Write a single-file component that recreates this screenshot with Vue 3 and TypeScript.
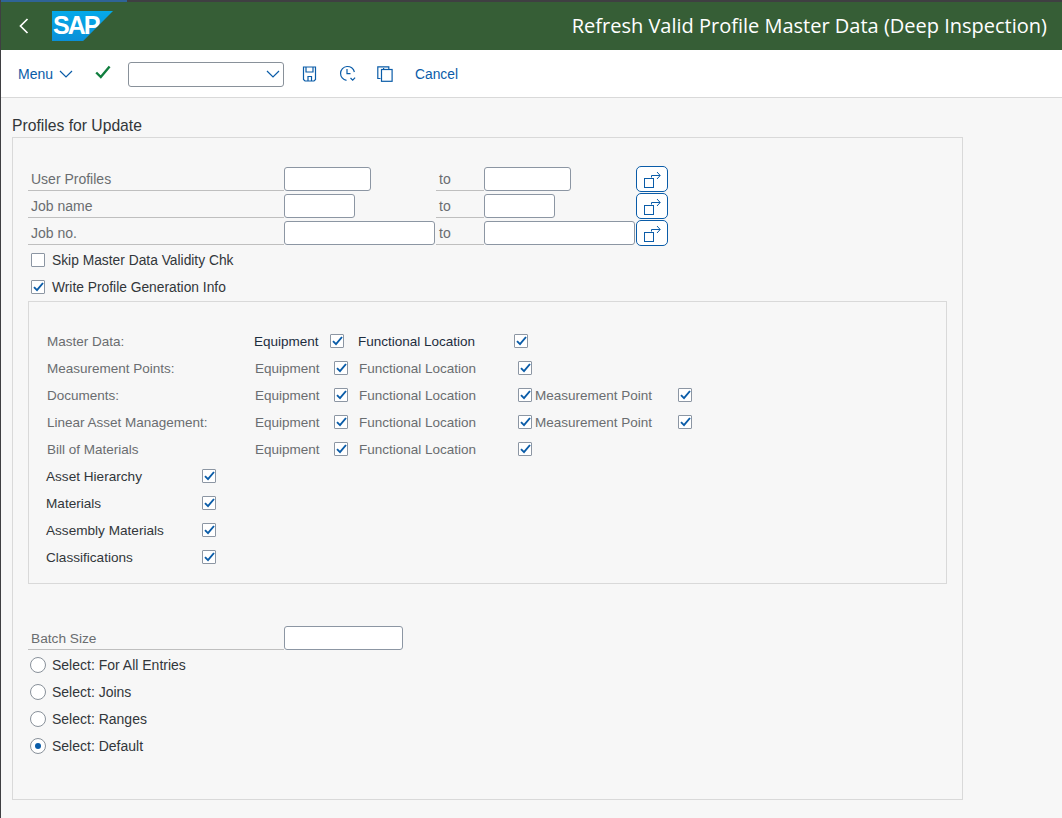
<script setup lang="ts">
const ranges = [
  { label: 'User Profiles', w: 'w87' },
  { label: 'Job name', w: 'w71' },
  { label: 'Job no.', w: 'w151' },
]
const groups = [
  { label: 'Measurement Points:', m: false },
  { label: 'Documents:', m: true },
  { label: 'Linear Asset Management:', m: true },
  { label: 'Bill of Materials', m: false },
]
const extras = ['Asset Hierarchy', 'Materials', 'Assembly Materials', 'Classifications']
const radios = [
  { label: 'Select: For All Entries', on: false },
  { label: 'Select: Joins', on: false },
  { label: 'Select: Ranges', on: false },
  { label: 'Select: Default', on: true },
]
</script>

<template>
  <div class="app">
    <div class="strip"><div class="progress"></div></div>
    <header class="shell">
      <svg class="back" width="10" height="16" viewBox="0 0 10 16"><path d="M8.5 1 1.5 8l7 7" fill="none" stroke="#fff" stroke-width="1.7" /></svg>
      <div class="logo"><span>SAP</span></div>
      <h1>Refresh Valid Profile Master Data (Deep Inspection)</h1>
    </header>
    <nav class="toolbar">
      <button class="tb-text menu">Menu
        <svg width="14" height="8" viewBox="0 0 14 8"><path d="M1 1l6 6 6-6" fill="none" stroke="#0a5ca8" stroke-width="1.2" /></svg>
      </button>
      <svg class="ok" width="16" height="14" viewBox="0 0 16 14"><path d="M1.2 7.5 5.8 12 14.6 1.4" fill="none" stroke="#107e3e" stroke-width="2.4" /></svg>
      <div class="cmd">
        <svg width="14" height="8" viewBox="0 0 14 8"><path d="M1 1l6 6 6-6" fill="none" stroke="#0a5ca8" stroke-width="1.2" /></svg>
      </div>
      <svg class="ico save" width="15" height="16" viewBox="0 0 15 16" fill="none" stroke="#0a5ca8" stroke-width="1.2"><path d="M1.5 1h12v12.5L12 15H3l-1.5-1.5z" /><path d="M4 1v5h7V1M6 15v-4.5h3.5V15" /></svg>
      <svg class="ico clock" width="17" height="17" viewBox="0 0 17 17" fill="none" stroke="#0a5ca8" stroke-width="1.2"><path d="M15.4 7A7 7 0 1 0 7.5 15.4" /><path d="M8 4v4.6h3.5M11.5 13l2.2 2.2 2.4-2.6" /></svg>
      <svg class="ico copy" width="16" height="16" viewBox="0 0 16 16" fill="none" stroke="#0a5ca8" stroke-width="1.2"><path d="M3.5 12.5H.8V.8h11v2.4" /><rect x="4.5" y="3.5" width="10.6" height="11.8" /><path d="M6.6 3.5V2" /></svg>
      <button class="tb-text cancel">Cancel</button>
    </nav>
    <main class="content">
      <h2>Profiles for Update</h2>
      <section class="panel">
        <div v-for="r in ranges" :key="r.label" class="row range">
          <span class="fld-label first">{{ r.label }}</span>
          <div class="cell-a"><div class="input" :class="r.w"></div></div>
          <span class="fld-label to">to</span>
          <div class="cell-b"><div class="input" :class="r.w"></div></div>
          <button class="multi">
            <svg width="30" height="24" viewBox="1 1 30 24" fill="none" stroke="#0a5ca8" stroke-width="1"><rect x="8.5" y="12.5" width="9" height="9" /><path d="M15.5 11.5v-2H24M21 6l3.2 3.5L21 13" /></svg>
          </button>
        </div>
        <label class="row chk-row"><span class="box"></span>Skip Master Data Validity Chk</label>
        <label class="row chk-row">
          <span class="box"><svg width="11" height="10" viewBox="0 0 11 10"><path d="M1 5.2l3 3L10 1" fill="none" stroke="#0a5ca8" stroke-width="1.9" /></svg></span>Write Profile Generation Info
        </label>

        <div class="inner">
          <div class="row g master">
            <span class="muted">Master Data:</span>
            <span class="dark">Equipment</span>
            <span class="box"><svg width="11" height="10" viewBox="0 0 11 10"><path d="M1 5.2l3 3L10 1" fill="none" stroke="#0a5ca8" stroke-width="1.9" /></svg></span>
            <span class="dark">Functional Location</span>
            <span class="box"><svg width="11" height="10" viewBox="0 0 11 10"><path d="M1 5.2l3 3L10 1" fill="none" stroke="#0a5ca8" stroke-width="1.9" /></svg></span>
          </div>
          <div v-for="g in groups" :key="g.label" class="row g">
            <span class="muted">{{ g.label }}</span>
            <span class="muted">Equipment</span>
            <span class="box"><svg width="11" height="10" viewBox="0 0 11 10"><path d="M1 5.2l3 3L10 1" fill="none" stroke="#0a5ca8" stroke-width="1.9" /></svg></span>
            <span class="muted">Functional Location</span>
            <span class="box"><svg width="11" height="10" viewBox="0 0 11 10"><path d="M1 5.2l3 3L10 1" fill="none" stroke="#0a5ca8" stroke-width="1.9" /></svg></span>
            <template v-if="g.m">
              <span class="muted">Measurement Point</span>
              <span class="box"><svg width="11" height="10" viewBox="0 0 11 10"><path d="M1 5.2l3 3L10 1" fill="none" stroke="#0a5ca8" stroke-width="1.9" /></svg></span>
            </template>
          </div>
          <div v-for="e in extras" :key="e" class="row extra">
            <span class="text">{{ e }}</span>
            <span class="box"><svg width="11" height="10" viewBox="0 0 11 10"><path d="M1 5.2l3 3L10 1" fill="none" stroke="#0a5ca8" stroke-width="1.9" /></svg></span>
          </div>
        </div>

        <div class="row batch">
          <span class="fld-label first">Batch Size</span>
          <div class="input w119"></div>
        </div>
        <label v-for="r in radios" :key="r.label" class="row radio-row">
          <span class="radio" :class="{ on: r.on }"></span>{{ r.label }}
        </label>
      </section>
    </main>
  </div>
</template>

<style>
html, body { margin: 0; background: #f7f7f7; overflow: hidden; }
</style>

<style scoped>
.app {
  width: 1061px; height: 818px; border-left: 1px solid #3f3f42; background: #f7f7f7;
  font-family: "Liberation Sans", Arial, sans-serif; font-size: 14px; color: #32363a;
  display: flex; flex-direction: column; overflow: hidden;
}
.strip { height: 2px; background: #3f3f42; flex: none; }
.progress { width: 126px; height: 2px; background: #2f6497; }
.shell {
  height: 48px; flex: none; background: #365e36; display: flex; align-items: center;
  padding: 0 15px 0 18px; box-sizing: border-box; color: #fff;
}
.back { flex: none; margin-right: 23px; }
.logo {
  width: 61px; height: 30px; flex: none; background: linear-gradient(180deg, #05a9e8, #0a90d8);
  clip-path: polygon(0 0, 100% 0, 51% 100%, 0 100%);
  color: #fff; font-weight: 700; font-size: 25px; line-height: 28px; letter-spacing: -2px; padding-left: 1px; box-sizing: border-box;
}
.shell h1 { margin: -2px 0 0 auto; font-family: "Open Sans", "Liberation Sans", sans-serif; font-size: 20px; font-weight: 400; white-space: nowrap; }
.toolbar {
  height: 48px; flex: none; box-sizing: border-box; background: #fff; border-bottom: 1px solid #d9d9d9;
  display: flex; align-items: center; padding: 1px 0 0 17px;
}
.tb-text { border: 0; background: none; padding: 0; font: inherit; color: #0a5ca8; display: flex; align-items: center; gap: 6px; }
.ok { margin-left: 22px; margin-top: -4px; }
.cmd {
  margin-left: 17px; width: 156px; height: 25px; box-sizing: border-box; background: #fff;
  border: 1px solid #89919a; border-radius: 3px; display: flex; align-items: center; justify-content: flex-end; padding-right: 3px;
}
.ico { flex: none; }
.save { margin-left: 18px; margin-top: -1px; }
.clock { margin-left: 22px; margin-top: -1px; }
.copy { margin-left: 21px; margin-top: -1px; }
.cancel { margin-left: 22px; font-size: 13.8px; }
.content { padding: 0 0 0 11px; flex: 1; }
.content h2 { margin: 0; height: 39px; box-sizing: border-box; padding-top: 18px; font-size: 15.7px; line-height: 20px; font-weight: 400; color: #32363a; }
.panel {
  width: 951px; height: 663px; box-sizing: border-box; border: 1px solid #d9d9d9; padding: 27px 15px 0 15px;
}
.row { height: 27px; display: flex; align-items: center; box-sizing: border-box; }
.range { align-items: flex-start; }
.fld-label {
  height: 25px; box-sizing: content-box; line-height: 28px; color: #6a6d70;
  border-bottom: 1px solid #bfbfbf; padding-left: 3px;
}
.fld-label.first { width: 253px; flex: none; }
.fld-label.to { width: 45px; flex: none; margin-left: 1px; }
.cell-a { width: 151px; flex: none; padding-top: 2px; }
.cell-b { width: 151px; flex: none; margin-right: 1px; padding-top: 2px; }
.input { height: 24px; box-sizing: border-box; background: #fff; border: 1px solid #8c96a3; border-radius: 3px; }
.w87 { width: 87px; }
.w71 { width: 71px; }
.w151 { width: 151px; }
.w119 { width: 119px; }
.multi {
  width: 32px; height: 26px; flex: none; box-sizing: border-box; background: #fff; padding: 0; margin-top: 1px;
  border: 1px solid #0a5ca8; border-radius: 5px; display: flex; align-items: center; justify-content: center;
}
.box {
  width: 14px; height: 14px; flex: none; box-sizing: border-box; background: #fff; border: 1px solid #8c96a3; border-radius: 1px;
  display: flex; align-items: center; justify-content: center;
}
.chk-row { padding: 1px 0 0 3px; gap: 7px; font-size: 13.8px; }
.inner {
  width: 919px; height: 283px; box-sizing: border-box; border: 1px solid #d9d9d9; padding: 25px 0 0 18px; margin: 1px 0 40px;
}
.g { display: grid; grid-template-columns: 208px 79px 25px 159px 17px 143px 14px; padding-top: 1px; font-size: 13.5px; }
.master { grid-template-columns: 207px 76px 28px 156px 14px; }
.muted { color: #6a6d70; }
.dark { color: #1d2d3e; }
.extra { display: grid; grid-template-columns: 156px 14px; margin-left: -1px; padding-top: 1px; font-size: 13.6px; }
.text { color: #32363a; }
.batch { align-items: flex-start; }
.batch .fld-label { font-size: 13.7px; line-height: 29px; }
.batch .input { margin-top: 2px; }
.radio-row { padding: 1px 0 0 2px; gap: 6px; }
.radio {
  width: 16px; height: 16px; flex: none; box-sizing: border-box; background: #fff; border: 1px solid #89919a; border-radius: 50%;
  display: flex; align-items: center; justify-content: center;
}
.radio.on::after { content: ""; width: 6px; height: 6px; border-radius: 50%; background: #0a5ca8; }
</style>
